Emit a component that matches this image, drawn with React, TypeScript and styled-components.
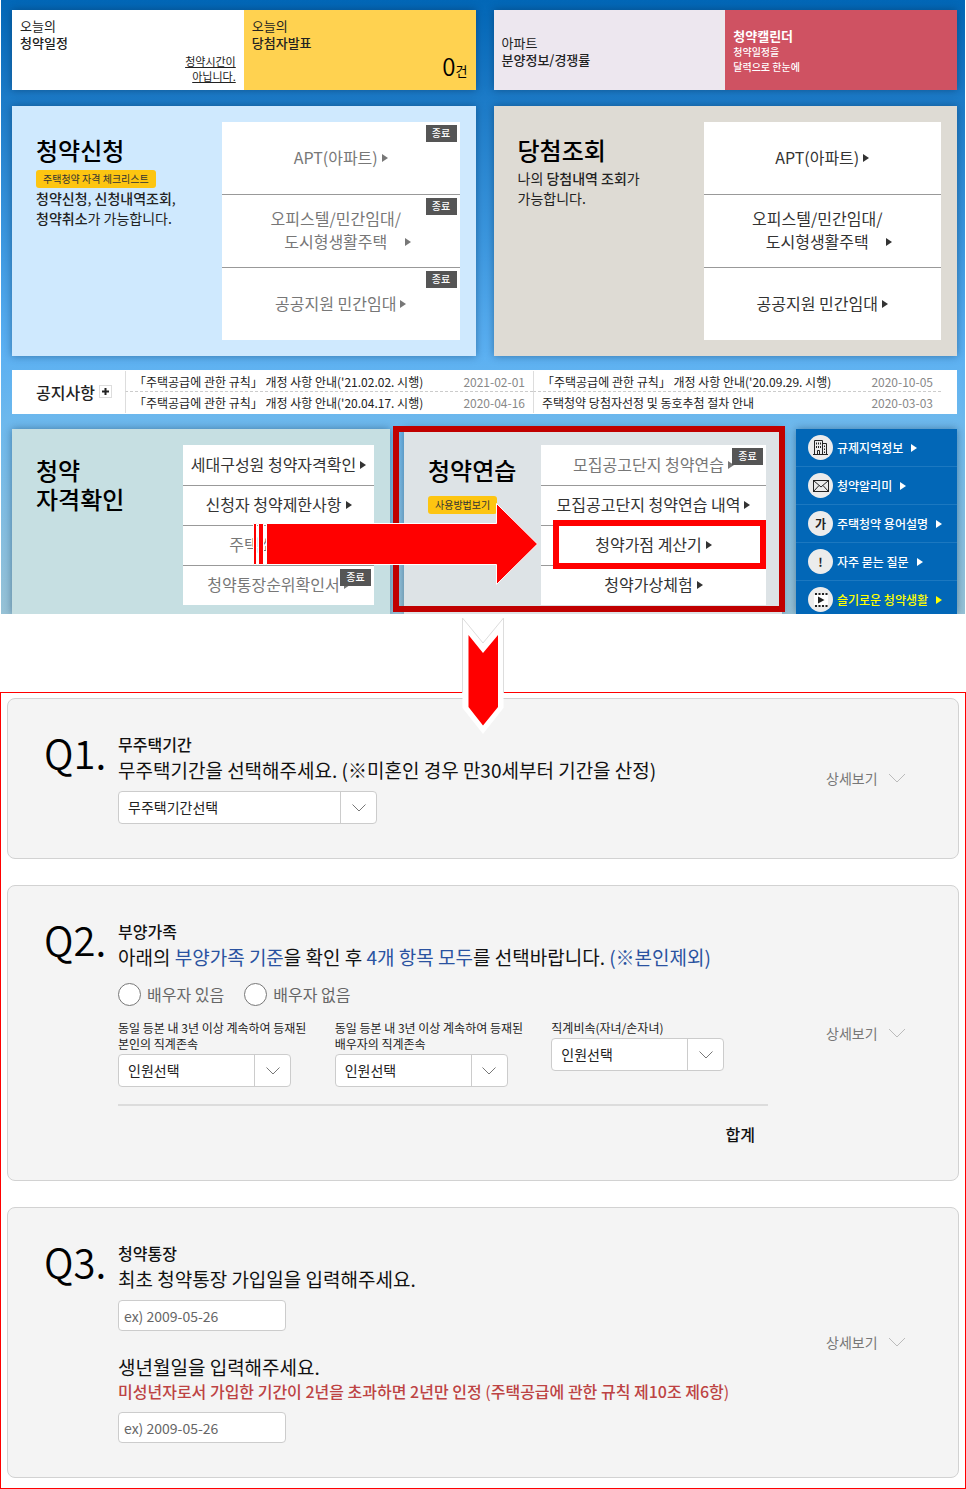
import React from "react";
import styled, { createGlobalStyle } from "styled-components";

const GlobalStyle = createGlobalStyle`
  *, *::before, *::after { box-sizing: border-box; }
  body {
    margin: 0;
    background: #fff;
    color: #111;
    font-family: "Noto Sans CJK KR", "Noto Sans", sans-serif;
    font-size: 14px;
  }
  h2, h3, p, ul { margin: 0; padding: 0; }
  ul { list-style: none; }
  a { color: inherit; text-decoration: none; }
  b { font-weight: 500; }
  button, input, select { font-family: inherit; }
`;

/* ---------- hero ---------- */

const Hero = styled.section`
  margin: 0 1px;
  padding: 10px 8px 0 11px;
  overflow: hidden;
  background: linear-gradient(#0267b7 0, #1a79c6 90px, #3c97df 240px, #5bb0f2 350px, #6fb9ec 430px, #97c2d6 614px);
`;

const Halves = styled.div`
  display: grid;
  grid-template-columns: 1fr 1fr;
  gap: 16px 18px;
`;

const shadow = "0 0 8px rgba(0, 30, 60, 0.4)";

const Pair = styled.div`
  display: grid;
  grid-template-columns: 1fr 1fr;
  min-height: 80px;
  box-shadow: ${shadow};
`;

const Tile = styled.a<{ $bg: string; $color?: string; $middle?: boolean }>`
  display: flex;
  flex-direction: column;
  justify-content: ${(p) => (p.$middle ? "center" : "space-between")};
  padding: 7px 8px 6px;
  background: ${(p) => p.$bg};
  color: ${(p) => p.$color ?? "#222"};
  font-size: 13px;
  line-height: 17px;
`;

const TileHint = styled.span`
  align-self: flex-end;
  font-size: 11px;
  line-height: 15px;
  text-align: right;
  text-decoration: underline;
`;

const TileName = styled.strong`
  font-weight: 700;
`;

const TileNote = styled.span`
  font-size: 10px;
  font-weight: 500;
  line-height: 15px;
`;

const Count = styled.span`
  align-self: flex-end;
  color: #000;
  line-height: 26px;
  strong {
    font-size: 24px;
    font-weight: 350;
  }
`;

const Panel = styled.section<{ $bg: string }>`
  position: relative;
  display: flex;
  padding: 16px 16px 0 24px;
  background: ${(p) => p.$bg};
  box-shadow: ${shadow};
`;

const ServicePanel = styled(Panel)`
  padding-bottom: 16px;
`;

const Intro = styled.div<{ $width: number }>`
  flex: none;
  width: ${(p) => p.$width}px;
  padding-top: 10px;
  line-height: 20px;
  color: #222;
`;

const ServiceIntro = styled(Intro)`
  padding-top: 13px;
`;

const PanelTitle = styled.h2`
  margin-bottom: 4px;
  color: #000;
  font-size: 24px;
  font-weight: 500;
  line-height: 29px;
`;

const Pill = styled.button<{ $spaced?: boolean }>`
  display: block;
  height: 18px;
  margin: ${(p) => (p.$spaced ? "12px" : "6px")} 0 0;
  padding: 0 7px;
  border: 0;
  border-radius: 3px;
  background: #fdc511;
  color: #333;
  font-size: 10px;
  line-height: 16px;
`;

const Menu = styled.ul`
  flex: 1;
  background: #fff;
`;

const MenuRow = styled.li<{ $tall?: boolean }>`
  position: relative;
  height: ${(p) => (p.$tall ? 73 : 40)}px;
  & + & {
    border-top: 1px solid #999;
  }
  &:first-child {
    height: ${(p) => (p.$tall ? 72 : 40)}px;
  }
`;

const MenuLink = styled.a<{ $closed?: boolean }>`
  display: flex;
  align-items: flex-end;
  align-content: center;
  justify-content: center;
  flex-wrap: wrap;
  height: 100%;
  padding-bottom: 2px;
  gap: 4px;
  color: ${(p) => (p.$closed ? "#777" : "#333")};
  font-size: 16px;
  line-height: 23px;
  text-align: center;
  white-space: nowrap;
`;

const Badge = styled.span`
  position: absolute;
  top: 3px;
  right: 3px;
  width: 31px;
  height: 17px;
  background: #555;
  color: #fff;
  font-size: 10px;
  font-weight: 500;
  line-height: 16px;
  text-align: center;
`;

const Highlight = styled.span`
  position: absolute;
  z-index: 1;
  inset: -6px 0 -4px 12px;
  border: 6px solid #f00;
  pointer-events: none;
`;

const Triangle = styled.svg`
  flex: none;
  width: 6px;
  height: 8px;
  fill: currentColor;
`;

const MenuTriangle = styled(Triangle)`
  margin-bottom: 7px;
`;

/* ---------- notices ---------- */

const NoticeBar = styled.section`
  display: flex;
  margin: 14px 0 15px;
  padding: 1px 16px 1px 24px;
  background: #fff;
`;

const NoticeTitle = styled.h2`
  display: flex;
  align-items: center;
  flex: none;
  gap: 4px;
  width: 89px;
  padding-bottom: 1px;
  color: #222;
  font-size: 16px;
  font-weight: 500;
`;

const MoreButton = styled.button`
  display: grid;
  place-items: center;
  width: 13px;
  height: 13px;
  padding: 0;
  border: 1px solid #ddd;
  background: #fff;
`;

const NoticeGrid = styled.ul`
  flex: 1;
  display: grid;
  grid-template-columns: 1fr 1fr;
`;

const NoticeItem = styled.li`
  display: flex;
  justify-content: space-between;
  height: 21px;
  padding: 0 8px;
  border-left: 1px solid #ddd;
  color: #222;
  font-size: 12px;
  line-height: 21px;
  white-space: nowrap;
  &:nth-child(-n + 2) {
    border-bottom: 1px dashed #ccc;
  }
  time {
    color: #888;
  }
`;

/* ---------- lower row ---------- */

const LowerRow = styled.div`
  display: grid;
  grid-template-columns: 1fr 1fr 161px;
  gap: 14px;
`;

const LowerPanel = styled(Panel)`
  padding-bottom: 9px;
`;

const PracticePanel = styled(LowerPanel)`
  z-index: 1;
`;

const Frame = styled.span`
  position: absolute;
  inset: -3px -3px 2px -11px;
  border: 6px solid #c00000;
  pointer-events: none;
`;

const RightArrow = styled.svg`
  position: absolute;
  top: 73px;
  left: -152px;
  width: 288px;
  height: 84px;
  pointer-events: none;
`;

const QuickLinks = styled.ul`
  background: #0267b7;
  box-shadow: ${shadow};
`;

const QuickItem = styled.li<{ $accent?: boolean }>`
  padding: 6px 12px;
  border-bottom: 1px solid #1c78c0;
  color: ${(p) => (p.$accent ? "#ffff00" : "#fff")};
  &:last-child {
    padding-bottom: 2px;
    border-bottom: 0;
  }
  a {
    display: flex;
    align-items: center;
    gap: 4px;
    font-size: 12px;
    font-weight: 500;
    line-height: 25px;
    white-space: nowrap;
  }
  a > svg:last-child {
    margin-left: 4px;
  }
`;

const Disc = styled.span`
  display: grid;
  place-items: center;
  flex: none;
  width: 25px;
  height: 25px;
  border-radius: 50%;
  background: #ececec;
  color: #222;
  font-weight: 700;
`;

/* ---------- calculator form ---------- */

const Calculator = styled.form`
  position: relative;
  display: flex;
  flex-direction: column;
  gap: 26px;
  margin-top: 78px;
  padding: 5px 6px 10px;
  border: 1px solid #f00;
`;

const DownArrow = styled.svg`
  position: absolute;
  top: -77px;
  left: calc(50% - 22px);
  width: 44px;
  height: 120px;
`;

const Question = styled.section`
  display: flex;
  padding: 33px 52px 34px 36px;
  border: 1px solid #d2d2d2;
  border-radius: 8px;
  background: #f4f4f4;
`;

const Number = styled.div`
  flex: none;
  width: 74px;
  color: #000;
  font-size: 40px;
  font-weight: 350;
  line-height: 40px;
`;

const Body = styled.div`
  flex: 1;
`;

const Topic = styled.h3`
  font-size: 16px;
  font-weight: 500;
  line-height: 24px;
`;

const Prompt = styled.label`
  display: block;
  margin-bottom: 8px;
  font-size: 19px;
  line-height: 27px;
`;

const Key = styled.span`
  color: #2a52a0;
`;

const Rule = styled.p`
  margin: -9px 0 9px;
  color: #bd4343;
  font-size: 16px;
  line-height: 24px;
`;

const DetailButton = styled.button`
  align-self: center;
  display: flex;
  align-items: center;
  justify-content: space-between;
  flex: none;
  width: 80px;
  margin-left: 58px;
  padding: 0;
  border: 0;
  background: none;
  color: #777;
  font-size: 14px;
  line-height: 20px;
`;

const SelectWrap = styled.div<{ $width: number }>`
  position: relative;
  width: ${(p) => p.$width}px;
  height: 33px;
  select {
    appearance: none;
    width: 100%;
    height: 100%;
    padding: 0 40px 2px 9px;
    border: 1px solid #ccc;
    border-radius: 4px;
    background: #fff;
    color: #222;
    font-size: 14px;
  }
  span {
    position: absolute;
    inset: 1px 1px 1px auto;
    display: grid;
    place-items: center;
    width: 36px;
    border-left: 1px solid #ccc;
    pointer-events: none;
  }
`;

const DateInput = styled.input`
  display: block;
  width: 168px;
  height: 31px;
  padding: 0 5px;
  border: 1px solid #ccc;
  border-radius: 4px;
  background: #fff;
  font-size: 14px;
  &::placeholder {
    color: #666;
    opacity: 1;
  }
  & + label {
    margin-top: 22px;
  }
`;

const Radios = styled.div`
  display: flex;
  gap: 20px;
  margin: 12px 0 14px;
  label {
    display: flex;
    align-items: center;
    gap: 6px;
    color: #666;
    font-size: 16px;
    line-height: 24px;
  }
  input {
    appearance: none;
    width: 23px;
    height: 23px;
    margin: 0;
    border: 1px solid #777;
    border-radius: 50%;
    background: #fff;
  }
  input:checked {
    border-width: 7px;
  }
`;

const Counts = styled.div`
  display: grid;
  grid-template-columns: repeat(3, 1fr);
  padding-bottom: 17px;
  border-bottom: 2px solid #dcdcdc;
  label {
    display: block;
    margin-bottom: 2px;
    color: #222;
    font-size: 12px;
    line-height: 16px;
    white-space: nowrap;
  }
`;

const Total = styled.p`
  padding: 16px 13px 0 0;
  font-size: 16px;
  font-weight: 500;
  line-height: 24px;
  text-align: right;
`;

/* ---------- pieces ---------- */

const trianglePath = <path d="M0 0L6 4L0 8Z" />;

type Entry = { label: React.ReactNode; closed?: boolean; badge?: boolean; marked?: boolean };

function MenuList({ items, tall }: { items: Entry[]; tall?: boolean }) {
  return (
    <Menu>
      {items.map((item, i) => (
        <MenuRow key={i} $tall={tall}>
          <MenuLink href="#" $closed={item.closed}>
            <span>{item.label}</span>
            <MenuTriangle viewBox="0 0 6 8">{trianglePath}</MenuTriangle>
          </MenuLink>
          {item.badge && <Badge>종료</Badge>}
          {item.marked && <Highlight />}
        </MenuRow>
      ))}
    </Menu>
  );
}

function Chevron({ wide }: { wide?: boolean }) {
  return wide ? (
    <svg width="18" height="10" viewBox="0 0 18 10" fill="none" stroke="#bbb">
      <path d="M1 1L9 9L17 1" />
    </svg>
  ) : (
    <svg width="14" height="8" viewBox="0 0 14 8" fill="none" stroke="#777">
      <path d="M0.5 0.5L7 7L13.5 0.5" />
    </svg>
  );
}

function SelectBox({ id, width, text }: { id: string; width: number; text: string }) {
  return (
    <SelectWrap $width={width}>
      <select id={id}>
        <option>{text}</option>
      </select>
      <span>
        <Chevron />
      </span>
    </SelectWrap>
  );
}

function Detail() {
  return (
    <DetailButton type="button">
      상세보기
      <Chevron wide />
    </DetailButton>
  );
}

const building = (
  <svg width="17" height="17" viewBox="0 0 17 17" fill="none" stroke="#222">
    <path d="M2.5 15.5V1.5H10.5V15.5M10.5 4.5H14.5V15.5M1 15.5H16" />
    <path d="M4.5 3.5V5.5M6.5 3.5V5.5M8.5 3.5V5.5M4.5 7V9M6.5 7V9M8.5 7V9M5.5 15V11.5H7.5V15M12.5 6.5V8M12.5 9.5V11M12.5 12.5V14" />
  </svg>
);

const envelope = (
  <svg width="16" height="12" viewBox="0 0 16 12" fill="none" stroke="#222">
    <rect x="0.5" y="0.5" width="15" height="11" />
    <path d="M0.5 0.5L8 7L15.5 0.5M0.5 11.5L6 5.5M15.5 11.5L10 5.5" />
  </svg>
);

const film = (
  <svg width="14" height="14" viewBox="0 0 14 14" fill="#222">
    <rect y="2" width="14" height="10" fill="#fff" />
    <path d="M4 3.5L10.5 7L4 10.5Z" />
    <path d="M1 0H3V2H1ZM4.5 0H6.5V2H4.5ZM8 0H10V2H8ZM11.5 0H13.5V2H11.5ZM1 12H3V14H1ZM4.5 12H6.5V14H4.5ZM8 12H10V14H8ZM11.5 12H13.5V14H11.5Z" />
  </svg>
);

const quickLinks: { icon: React.ReactNode; label: string; accent?: boolean }[] = [
  { icon: building, label: "규제지역정보" },
  { icon: envelope, label: "청약알리미" },
  { icon: "가", label: "주택청약 용어설명" },
  { icon: "!", label: "자주 묻는 질문" },
  { icon: film, label: "슬기로운 청약생활", accent: true },
];

const office = (
  <>
    오피스텔/민간임대/
    <br />
    도시형생활주택
  </>
);

const notices = [
  ["「주택공급에 관한 규칙」 개정 사항 안내('21.02.02. 시행)", "2021-02-01"],
  ["「주택공급에 관한 규칙」 개정 사항 안내('20.09.29. 시행)", "2020-10-05"],
  ["「주택공급에 관한 규칙」 개정 사항 안내('20.04.17. 시행)", "2020-04-16"],
  ["주택청약 당첨자선정 및 동호추첨 절차 안내", "2020-03-03"],
];

export default function App() {
  return (
    <>
      <GlobalStyle />
      <Hero>
        <Halves>
          <Pair>
            <Tile href="#" $bg="#fff">
              <span>
                오늘의
                <br />
                <b>청약일정</b>
              </span>
              <TileHint>
                청약시간이
                <br />
                아닙니다.
              </TileHint>
            </Tile>
            <Tile href="#" $bg="#ffd250">
              <span>
                오늘의
                <br />
                <b>당첨자발표</b>
              </span>
              <Count>
                <strong>0</strong>건
              </Count>
            </Tile>
          </Pair>
          <Pair>
            <Tile href="#" $bg="#ede7ef" $middle>
              <span>아파트</span>
              <b>분양정보/경쟁률</b>
            </Tile>
            <Tile href="#" $bg="#cf5262" $color="#fff" $middle>
              <TileName>청약캘린더</TileName>
              <TileNote>
                청약일정을
                <br />
                달력으로 한눈에
              </TileNote>
            </Tile>
          </Pair>

          <ServicePanel $bg="#cfe9fe">
            <ServiceIntro $width={186}>
              <PanelTitle>청약신청</PanelTitle>
              <Pill>주택청약 자격 체크리스트</Pill>
              <p>
                <b>청약신청</b>, <b>신청내역조회</b>,
                <br />
                <b>청약취소</b>가 가능합니다.
              </p>
            </ServiceIntro>
            <MenuList
              tall
              items={[
                { label: "APT(아파트)", closed: true, badge: true },
                { label: office, closed: true, badge: true },
                { label: "공공지원 민간임대", closed: true, badge: true },
              ]}
            />
          </ServicePanel>
          <ServicePanel $bg="#dedbd4">
            <ServiceIntro $width={186}>
              <PanelTitle>당첨조회</PanelTitle>
              <p>
                나의 <b>당첨내역 조회</b>가
                <br />
                가능합니다.
              </p>
            </ServiceIntro>
            <MenuList
              tall
              items={[{ label: "APT(아파트)" }, { label: office }, { label: "공공지원 민간임대" }]}
            />
          </ServicePanel>
        </Halves>

        <NoticeBar>
          <NoticeTitle>
            공지사항
            <MoreButton aria-label="공지사항 더보기">
              <svg width="7" height="7" viewBox="0 0 7 7" stroke="#222" strokeWidth="2">
                <path d="M3.5 0V7M0 3.5H7" />
              </svg>
            </MoreButton>
          </NoticeTitle>
          <NoticeGrid>
            {notices.map(([text, date]) => (
              <NoticeItem key={text}>
                <a href="#">{text}</a>
                <time>{date}</time>
              </NoticeItem>
            ))}
          </NoticeGrid>
        </NoticeBar>

        <LowerRow>
          <LowerPanel $bg="#c6dfe2">
            <Intro $width={147}>
              <PanelTitle>
                청약
                <br />
                자격확인
              </PanelTitle>
            </Intro>
            <MenuList
              items={[
                { label: "세대구성원 청약자격확인" },
                { label: "신청자 청약제한사항" },
                { label: "주택소유확인", closed: true },
                { label: "청약통장순위확인서", closed: true, badge: true },
              ]}
            />
          </LowerPanel>
          <PracticePanel $bg="#dde3e6">
            <Intro $width={113}>
              <PanelTitle>청약연습</PanelTitle>
              <Pill $spaced>사용방법보기</Pill>
            </Intro>
            <MenuList
              items={[
                { label: "모집공고단지 청약연습", closed: true, badge: true },
                { label: "모집공고단지 청약연습 내역" },
                { label: "청약가점 계산기", marked: true },
                { label: "청약가상체험" },
              ]}
            />
            <Frame />
            <RightArrow viewBox="0 0 288 84" fill="#f00" stroke="#fff">
              <path d="M1.5 21.5H4.5V62.5H1.5ZM6.5 21.5H11.5V62.5H6.5ZM14.5 21.5H244.5V1.5L285.5 42L244.5 82.5V62.5H14.5Z" />
            </RightArrow>
          </PracticePanel>
          <QuickLinks>
            {quickLinks.map((link) => (
              <QuickItem key={link.label} $accent={link.accent}>
                <a href="#">
                  <Disc>{link.icon}</Disc>
                  {link.label}
                  <Triangle viewBox="0 0 6 8">{trianglePath}</Triangle>
                </a>
              </QuickItem>
            ))}
          </QuickLinks>
        </LowerRow>
      </Hero>

      <Calculator>
        <Question>
          <Number>Q1.</Number>
          <Body>
            <Topic>무주택기간</Topic>
            <Prompt htmlFor="period">무주택기간을 선택해주세요. (※미혼인 경우 만30세부터 기간을 산정)</Prompt>
            <SelectBox id="period" width={259} text="무주택기간선택" />
          </Body>
          <Detail />
        </Question>

        <Question>
          <Number>Q2.</Number>
          <Body>
            <Topic>부양가족</Topic>
            <Prompt as="p">
              아래의 <Key>부양가족 기준</Key>을 확인 후 <Key>4개 항목 모두</Key>를 선택바랍니다. <Key>(※본인제외)</Key>
            </Prompt>
            <Radios>
              <label>
                <input type="radio" name="spouse" />
                배우자 있음
              </label>
              <label>
                <input type="radio" name="spouse" />
                배우자 없음
              </label>
            </Radios>
            <Counts>
              <div>
                <label htmlFor="own">
                  동일 등본 내 3년 이상 계속하여 등재된
                  <br />
                  본인의 직계존속
                </label>
                <SelectBox id="own" width={173} text="인원선택" />
              </div>
              <div>
                <label htmlFor="inlaws">
                  동일 등본 내 3년 이상 계속하여 등재된
                  <br />
                  배우자의 직계존속
                </label>
                <SelectBox id="inlaws" width={173} text="인원선택" />
              </div>
              <div>
                <label htmlFor="children">직계비속(자녀/손자녀)</label>
                <SelectBox id="children" width={173} text="인원선택" />
              </div>
            </Counts>
            <Total>합계</Total>
          </Body>
          <Detail />
        </Question>

        <Question>
          <Number>Q3.</Number>
          <Body>
            <Topic>청약통장</Topic>
            <Prompt htmlFor="joined">최초 청약통장 가입일을 입력해주세요.</Prompt>
            <DateInput id="joined" placeholder="ex) 2009-05-26" />
            <Prompt htmlFor="birth">생년월일을 입력해주세요.</Prompt>
            <Rule>
              <b>미성년자로서 가입한 기간이 2년을 초과하면 2년만 인정</b> (<b>주택공급에 관한 규칙 제10조 제6항</b>)
            </Rule>
            <DateInput id="birth" placeholder="ex) 2009-05-26" />
          </Body>
          <Detail />
        </Question>

        <DownArrow viewBox="0 0 44 120">
          <path d="M1.5 2L22 27L42.5 2V92L22 118L1.5 92Z" fill="#fff" />
          <path d="M1.5 77V2L22 27L42.5 2V77" fill="none" stroke="#ddd" />
          <path d="M7.5 19L22 37L37 19V91L22 109.5L7.5 91Z" fill="#f00" />
        </DownArrow>
      </Calculator>
    </>
  );
}
